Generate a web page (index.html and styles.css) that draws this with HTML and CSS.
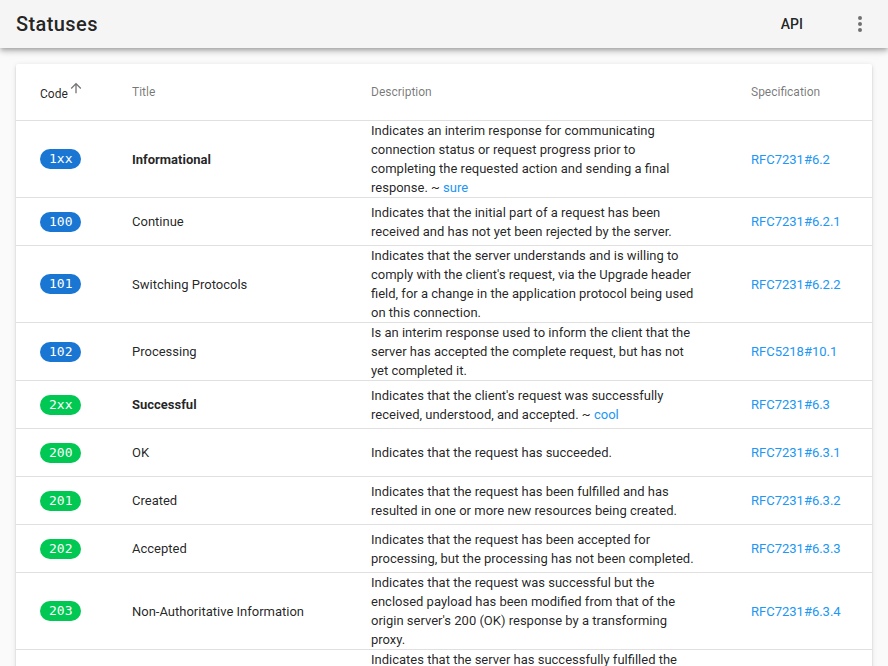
FILE: index.html
```html
<!DOCTYPE html>
<html lang="en">
<head>
<meta charset="utf-8">
<title>Statuses</title>
<link rel="stylesheet" href="styles.css">
</head>
<body>
<div class="app">
  <header class="toolbar">
    <div class="toolbar-title">Statuses</div>
    <div class="toolbar-spacer"></div>
    <button class="btn-flat">API</button>
    <button class="btn-icon" aria-label="More">
      <svg width="24" height="24" viewBox="0 0 24 24"><path fill="currentColor" d="M12,16A2,2 0 0,1 14,18A2,2 0 0,1 12,20A2,2 0 0,1 10,18A2,2 0 0,1 12,16M12,10A2,2 0 0,1 14,12A2,2 0 0,1 12,14A2,2 0 0,1 10,12A2,2 0 0,1 12,10M12,4A2,2 0 0,1 14,6A2,2 0 0,1 12,8A2,2 0 0,1 10,6A2,2 0 0,1 12,4Z"/></svg>
    </button>
  </header>
  <main class="content">
    <div class="card">
      <table class="table">
        <colgroup>
          <col class="col-code"><col class="col-title"><col class="col-desc"><col class="col-spec">
        </colgroup>
        <thead>
          <tr>
            <th class="active">Code<svg class="sort-icon" width="16" height="16" viewBox="0 0 24 24"><path fill="currentColor" d="M13,20H11V8L5.5,13.5L4.08,12.08L12,4.16L19.92,12.08L18.5,13.5L13,8V20Z"/></svg></th>
            <th>Title</th>
            <th>Description</th>
            <th>Specification</th>
          </tr>
        </thead>
        <tbody>
          <tr>
            <td><span class="badge info">1xx</span></td>
            <td class="strong">Informational</td>
            <td>Indicates an interim response for communicating connection status or request progress prior to completing the requested action and sending a final response. ~ <a href="#">sure</a></td>
            <td><a href="#">RFC7231#6.2</a></td>
          </tr>
          <tr>
            <td><span class="badge info">100</span></td>
            <td>Continue</td>
            <td>Indicates that the initial part of a request has been received and has not yet been rejected by the server.</td>
            <td><a href="#">RFC7231#6.2.1</a></td>
          </tr>
          <tr>
            <td><span class="badge info">101</span></td>
            <td>Switching Protocols</td>
            <td>Indicates that the server understands and is willing to comply with the client's request, via the Upgrade header field, for a change in the application protocol being used on this connection.</td>
            <td><a href="#">RFC7231#6.2.2</a></td>
          </tr>
          <tr>
            <td><span class="badge info">102</span></td>
            <td>Processing</td>
            <td>Is an interim response used to inform the client that the server has accepted the complete request, but has not yet completed it.</td>
            <td><a href="#">RFC5218#10.1</a></td>
          </tr>
          <tr>
            <td><span class="badge ok">2xx</span></td>
            <td class="strong">Successful</td>
            <td>Indicates that the client's request was successfully received, understood, and accepted. ~ <a href="#">cool</a></td>
            <td><a href="#">RFC7231#6.3</a></td>
          </tr>
          <tr>
            <td><span class="badge ok">200</span></td>
            <td>OK</td>
            <td>Indicates that the request has succeeded.</td>
            <td><a href="#">RFC7231#6.3.1</a></td>
          </tr>
          <tr>
            <td><span class="badge ok">201</span></td>
            <td>Created</td>
            <td>Indicates that the request has been fulfilled and has resulted in one or more new resources being created.</td>
            <td><a href="#">RFC7231#6.3.2</a></td>
          </tr>
          <tr>
            <td><span class="badge ok">202</span></td>
            <td>Accepted</td>
            <td>Indicates that the request has been accepted for processing, but the processing has not been completed.</td>
            <td><a href="#">RFC7231#6.3.3</a></td>
          </tr>
          <tr>
            <td><span class="badge ok">203</span></td>
            <td>Non-Authoritative Information</td>
            <td>Indicates that the request was successful but the enclosed payload has been modified from that of the origin server's 200 (OK) response by a transforming proxy.</td>
            <td><a href="#">RFC7231#6.3.4</a></td>
          </tr>
          <tr>
            <td><span class="badge ok">204</span></td>
            <td>No Content</td>
            <td>Indicates that the server has successfully fulfilled the request and that there is no additional content to send in the response payload body.</td>
            <td><a href="#">RFC7231#6.3.5</a></td>
          </tr>
        </tbody>
      </table>
    </div>
  </main>
</div>
</body>
</html>
```

FILE: styles.css
```css
html, body {
  margin: 0;
  padding: 0;
  height: 100%;
  overflow: hidden;
}
body {
  font-family: Roboto, "Liberation Sans", sans-serif;
  background: #fafafa;
  color: rgba(0, 0, 0, 0.87);
}
.app {
  display: flex;
  flex-direction: column;
  height: 666px;
}
.toolbar {
  position: relative;
  z-index: 2;
  flex: 0 0 48px;
  height: 48px;
  display: flex;
  align-items: center;
  padding: 0 4px 0 16px;
  background: #f5f5f5;
  box-shadow: 0 2px 4px -1px rgba(0,0,0,.2), 0 4px 5px 0 rgba(0,0,0,.14), 0 1px 10px 0 rgba(0,0,0,.12);
}
.toolbar-title {
  font-size: 20px;
  font-weight: 500;
  letter-spacing: 0.02em;
  color: rgba(0, 0, 0, 0.87);
}
.toolbar-spacer { flex: 1; }
.btn-flat {
  background: none;
  border: 0;
  font-family: inherit;
  font-size: 14px;
  font-weight: 500;
  color: rgba(0, 0, 0, 0.87);
  height: 36px;
  padding: 0 16px;
  margin-right: 17px;
}
.btn-icon {
  background: none;
  border: 0;
  width: 48px;
  height: 48px;
  padding: 0;
  display: flex;
  align-items: center;
  justify-content: center;
  color: rgba(0, 0, 0, 0.54);
}
.content {
  flex: 1;
  padding: 16px;
  overflow: hidden;
}
.card {
  background: #fff;
  border-radius: 2px;
  box-shadow: 0 3px 1px -2px rgba(0,0,0,.2), 0 2px 2px 0 rgba(0,0,0,.14), 0 1px 5px 0 rgba(0,0,0,.12);
}
.table {
  width: 100%;
  border-collapse: collapse;
  table-layout: fixed;
}
.col-code { width: 92px; }
.col-title { width: 239px; }
.col-desc { width: 380px; }
.col-spec { width: 145px; }
.table th {
  height: 56px;
  padding: 0 24px;
  text-align: left;
  font-size: 12px;
  font-weight: 400;
  color: rgba(0, 0, 0, 0.54);
  border-bottom: 1px solid rgba(0, 0, 0, 0.12);
  white-space: nowrap;
}
.table th.active { color: rgba(0, 0, 0, 0.87); }
.sort-icon {
  color: rgba(0, 0, 0, 0.54);
  vertical-align: -1px;
  position: relative;
  top: -3px;
  margin-left: 0;
}
.table td {
  height: 47px;
  padding: 0 24px;
  font-size: 13px;
  line-height: 19px;
  vertical-align: middle;
  border-bottom: 1px solid rgba(0, 0, 0, 0.12);
  color: rgba(0, 0, 0, 0.87);
}
.table td.strong { font-weight: 700; }
.table a {
  color: #2196f3;
  text-decoration: none;
}
.badge {
  display: inline-block;
  height: 20px;
  line-height: 20px;
  padding: 0 9px;
  border-radius: 10px;
  color: #fff;
  font-family: "DejaVu Sans Mono", "Liberation Mono", monospace;
  font-size: 13px;
  vertical-align: middle;
}
.badge.info { background: #1976d2; }
.badge.ok { background: #00c853; }
```
